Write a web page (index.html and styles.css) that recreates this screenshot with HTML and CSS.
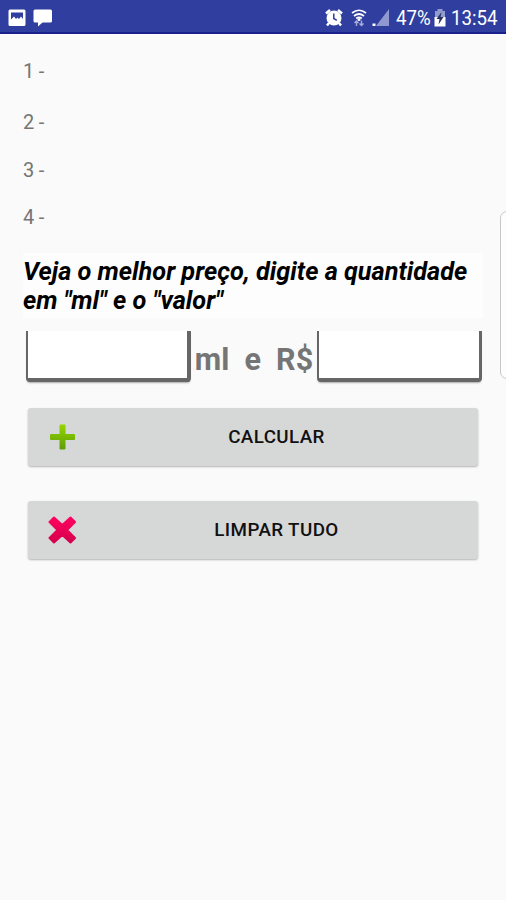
FILE: index.html
```html
<!DOCTYPE html>
<html lang="pt-BR">
<head>
  <meta charset="UTF-8" />
  <meta name="viewport" content="width=device-width, initial-scale=1.0"/>
  <title>Melhor Preço</title>
  <link rel="stylesheet" href="styles.css">
</head>
<body>

  <!-- Status bar -->
  <header class="status">
    <svg width="18" height="18" viewBox="0 0 18 18">
      <path fill="#fff" fill-rule="evenodd" d="M2 0.5h14q1.500 0 1.500 1.500v13.500q0 1.500-1.500 1.500h-14q-1.500 0-1.500-1.500v-13.500q0-1.500 1.500-1.500zM3 3.500v7l3-3 2 2.500 1.500-1.500 1.500 1.500 2-2.500 2 2.500v-6.500z"/>
    </svg>
    <svg class="chat" width="20" height="18" viewBox="0 0 20 18">
      <path fill="#fff" d="M2 0.5h15.500q1.500 0 1.500 1.500v10q0 1.500-1.500 1.500h-8l-4.500 4v-4h-3q-1.500 0-1.500-1.500v-10q0-1.500 1.500-1.500z"/>
    </svg>
    <div class="right">
      <svg class="alarm" width="18" height="18" viewBox="0 0 18 18">
        <path d="M1 4.500l4-3.500M17 4.500l-4-3.500M4 14l-2 2.500M14 14l2 2.500" stroke="#fff" stroke-width="2.500"/>
        <circle cx="9" cy="9" r="7.500" fill="#fff"/>
        <path d="M8.800 4.500v5l3 1.800" fill="none" stroke="#303f9f" stroke-width="1.500"/>
      </svg>
      <svg class="wifi" width="16" height="18" viewBox="0 0 16 18">
        <g fill="none" stroke="#fff" stroke-width="1.700">
          <path d="M1 4q7-5.500 14 0M3 7q5-4 10 0M5.200 9.500q2.800-2.200 5.600 0"/>
          <path d="M5.500 17v-5M3.500 14l2-2 2 2M10.500 11.500v5M8.500 14.500l2 2 2-2" stroke="#a5addb" stroke-width="1.400"/>
        </g>
        <circle cx="8" cy="10.500" r="1.500" fill="#fff"/>
      </svg>
      <svg class="signal" width="18" height="18" viewBox="0 0 18 18">
        <path d="M17 0v17h-13z" fill="#8f98cf"/>
        <path d="M0.500 14.500h3v2.500h-3z" fill="#fff"/>
      </svg>
      <span class="percent">47%</span>
      <svg class="battery" width="12" height="18" viewBox="0 0 12 18">
        <path d="M3.500 0h5v2h2.500v6h-10v-6h2.500z" fill="#929bd0"/>
        <path d="M0.500 8h11v9.500h-11z" fill="#fff"/>
        <path d="M7.500 3l-5 7h3l-1 5.500 5-7.500h-3z" fill="#26315f"/>
      </svg>
      <span class="clock">13:54</span>
    </div>
  </header>

  <main>
    <!-- Results -->
    <section class="results">
      <p>1 -</p>
      <p>2 -</p>
      <p>3 -</p>
      <p>4 -</p>
    </section>

    <h1>Veja o melhor preço, digite a quantidade<br>em "ml" e o "valor"</h1>

    <!-- Quantity and price -->
    <section class="fields">
      <input class="quantity" type="text" aria-label="Quantidade em ml">
      <span class="units">ml&nbsp; e&nbsp; R$</span>
      <input type="text" aria-label="Valor">
    </section>

    <section class="actions">
      <button type="button">
        <svg width="28" height="28" viewBox="0 0 28 28">
          <defs>
            <linearGradient id="green" x1="0" y1="0" x2="0" y2="1">
              <stop offset="0" stop-color="#93d500"/>
              <stop offset="1" stop-color="#5f9d08"/>
            </linearGradient>
          </defs>
          <path fill="url(#green)" d="M12.500 1.500h4q1 0 1 1v8.500h8.500q1 0 1 1v4q0 1-1 1h-8.500v8.500q0 1-1 1h-4q-1 0-1-1v-8.500h-8.500q-1 0-1-1v-4q0-1 1-1h8.500v-8.500q0-1 1-1z"/>
        </svg>
        <span>CALCULAR</span>
      </button>
      <button type="button">
        <svg width="28" height="28" viewBox="0 0 28 28">
          <defs>
            <linearGradient id="red" x1="0" y1="0" x2="0" y2="1">
              <stop offset="0" stop-color="#ff005f"/>
              <stop offset="1" stop-color="#d5004c"/>
            </linearGradient>
          </defs>
          <path fill="url(#red)" stroke="url(#red)" stroke-width="2" stroke-linejoin="round" d="M6 1.500l8.300 7.500 8.200-7.500 4.500 4.500-8 8 8 8-4.500 4.500-8.200-7.500-8.300 7.500-4.500-4.500 8-8-8-8z"/>
        </svg>
        <span>LIMPAR TUDO</span>
      </button>
    </section>
  </main>

  <div class="edge-handle"></div>

</body>
</html>
```
FILE: styles.css
```css
body {
  font-family: Roboto, "Liberation Sans", sans-serif;
  background: #fafafa;
  color: #000;
  margin: 0;
  min-height: 900px;
  position: relative;
  overflow: hidden;
}
.status {
  display: flex;
  align-items: center;
  height: 34px;
  box-sizing: border-box;
  padding: 3px 8px 0;
  background: #303f9f;
  border-bottom: 2px solid #1a1f8c;
  color: #fff;
}
.chat {
  margin-left: 7px;
}
.right {
  display: flex;
  align-items: center;
  margin-left: auto;
}
.wifi {
  margin-left: 8px;
}
.signal {
  margin-left: 5px;
}
/* narrow digits like the Samsung system font */
.percent, .clock {
  font-size: 21px;
  line-height: 32px;
  white-space: nowrap;
  transform: scaleX(0.89);
  transform-origin: left;
}
.percent {
  width: 35px;
  margin-left: 6px;
}
.battery {
  margin-left: 3px;
}
.clock {
  width: 47px;
  margin-left: 5px;
}
main {
  padding: 25px 23px 0;
}
.results {
  color: #757575;
  font-size: 20px;
  line-height: 24px;
  letter-spacing: -0.2px;
}
.results p {
  margin: 0 0 24px;
}
.results p:first-child {
  margin-bottom: 27px;
}
.results p:nth-child(2), .results p:nth-child(3) {
  margin-bottom: 23.7px;
}
.results p:last-child {
  margin-bottom: 23.6px;
}
h1 {
  margin: 0;
  padding: 4px 0 3px;
  background: #fdfdfd;
  font-size: 25.3px;
  font-style: italic;
  font-weight: bold;
  line-height: 29px;
  white-space: nowrap;
}
.fields {
  display: flex;
  align-items: center;
  margin: 13px 1px 0 3px;
}
.fields input {
  width: 165px;
  height: 51px;
  box-sizing: border-box;
  border: 2px solid #666;
  border-top: none;
  border-bottom-width: 4px;
  border-right-width: 3px;
  border-radius: 0 0 4px 4px;
  background: #fff;
  box-shadow: 0 2px 2px -1px #aaa;
  padding: 4px;
  font: inherit;
  outline: none;
}
.fields .quantity {
  border-right-width: 4px;
}
.units {
  flex: 1;
  text-align: center;
  color: #757575;
  font-size: 30.5px;
  font-weight: bold;
  line-height: 36px;
  padding-top: 7px;
  white-space: nowrap;
}
.actions {
  display: grid;
  gap: 35px;
  margin: 26px 5px 0;
}
button {
  display: flex;
  align-items: center;
  height: 58px;
  padding: 0 1px 0 20px;
  border: none;
  border-radius: 3px;
  background: #d6d8d7;
  box-shadow: 0 1px 2px #b4b4b4;
  color: #111;
  font-family: inherit;
  font-size: 18.8px;
  font-weight: 500;
  letter-spacing: 0.4px;
}
button span {
  flex: 1;
  text-align: center;
}
/* Samsung edge panel */
.edge-handle {
  position: absolute;
  top: 211px;
  right: -8px;
  width: 12px;
  height: 166px;
  border: 1px solid #c8c8c8;
  border-radius: 8px;
  background: #fdfdfd;
}
```
